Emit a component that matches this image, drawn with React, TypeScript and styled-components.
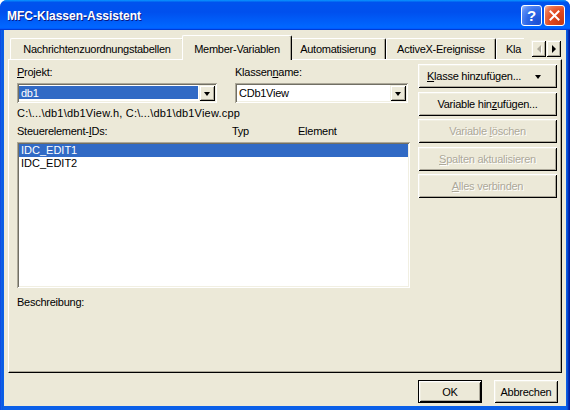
import React from "react";
import styled, { createGlobalStyle, css } from "styled-components";

const GlobalStyle = createGlobalStyle`
  html, body { margin: 0; padding: 0; background: #ffffff; }
  body {
    font-family: "Liberation Sans", Arial, sans-serif;
    font-size: 11px;
    letter-spacing: -0.25px;
    color: #000;
  }
  * { box-sizing: border-box; }
`;

const Window = styled.div`
  width: 570px;
  height: 410px;
  display: flex;
  flex-direction: column;
  border-radius: 7px 7px 0 0;
  overflow: hidden;
  background: linear-gradient(90deg, #0831d9 0, #166aee 1px, #0855dd 2px, #0a5fe8 3px, #0a5fe8 566px, #0a5ae0 567px, #0741c9 568px, #001ea0 569px);
`;

const TitleBar = styled.div`
  flex: none;
  height: 30px;
  display: flex;
  align-items: center;
  padding: 0 5px 0 7px;
  background: linear-gradient(180deg, #0997ff, #0053ee 8%, #0050ee 40%, #0066ff 88%, #0066ff 93%, #005bff 95%, #003dd7 96%, #003dd7);
`;

const TitleText = styled.div`
  flex: 1;
  color: #fff;
  font-weight: bold;
  font-size: 12px;
  letter-spacing: 0;
  text-shadow: 1px 1px #0a1883;
  padding-top: 1px;
`;

const CaptionButton = styled.div<{ $kind: "help" | "close" }>`
  width: 21px;
  height: 21px;
  margin-left: 2px;
  border: 1px solid #fff;
  border-radius: 3px;
  display: flex;
  align-items: center;
  justify-content: center;
  color: #fff;
  font-weight: bold;
  font-size: 15px;
  letter-spacing: 0;
  ${(p) =>
    p.$kind === "help"
      ? css`background: radial-gradient(circle at 85% 85%, #1b4fd4 0, #2d68e8 50%, #5a8cf5 80%, #a9c6ff 100%);`
      : css`background: radial-gradient(circle at 85% 85%, #c73a12 0, #e2491f 50%, #ec7853 80%, #f9c0a8 100%);`}
`;

const Client = styled.div`
  flex: 1;
  margin: 0 4px 4px;
  background: #ece9d8;
  display: flex;
  flex-direction: column;
  padding: 5px 4px 0;
`;

const TabRow = styled.div`
  flex: none;
  height: 25px;
  margin-bottom: -1px;
  display: flex;
  align-items: flex-end;
  padding-left: 2px;
  position: relative;
  z-index: 2;
`;

const TabStrip = styled.div`
  flex: none;
  width: 514px;
  height: 25px;
  display: flex;
  align-items: flex-end;
  overflow: hidden;
`;

const Tab = styled.div<{ $w: number; $active?: boolean; $cut?: boolean }>`
  flex: none;
  width: ${(p) => p.$w}px;
  height: ${(p) => (p.$active ? 25 : 21)}px;
  margin-bottom: ${(p) => (p.$active ? 0 : 1)}px;
  display: flex;
  align-items: center;
  justify-content: ${(p) => (p.$cut ? "flex-start" : "center")};
  padding-left: ${(p) => (p.$cut ? 9 : 0)}px;
  white-space: nowrap;
  background: #ece9d8;
  border-top: 1px solid #fff;
  border-left: 1px solid #fff;
  border-right: ${(p) => (p.$cut ? "none" : "1px solid #000")};
  box-shadow: ${(p) => (p.$cut ? "none" : "inset -1px 0 #aca899")};
  border-radius: 2px 2px 0 0;
  ${(p) =>
    p.$active &&
    css`
      margin-left: -2px;
      margin-right: -2px;
      position: relative;
      z-index: 1;
      padding-top: 1px;
    `}
`;

const Scroller = styled.div`
  display: flex;
  margin-left: 7px;
  margin-bottom: 3px;
`;

const ScrollButton = styled.div`
  width: 15px;
  height: 17px;
  background: #ece9d8;
  display: flex;
  align-items: center;
  justify-content: center;
  box-shadow: inset 1px 1px #f1efe2, inset -1px -1px #000, inset 2px 2px #fff, inset -2px -2px #aca899;
`;

const SideArrow = styled.div<{ $dir: "left" | "right"; $disabled?: boolean }>`
  width: 0;
  height: 0;
  border-top: 4px solid transparent;
  border-bottom: 4px solid transparent;
  ${(p) =>
    p.$dir === "left"
      ? css`border-right: 4px solid ${p.$disabled ? "#aca899" : "#000"};`
      : css`border-left: 4px solid ${p.$disabled ? "#aca899" : "#000"};`}
  ${(p) => p.$disabled && css`filter: drop-shadow(1px 1px 0 #fff);`}
`;

const Panel = styled.div`
  flex: none;
  height: 314px;
  border-top: 1px solid #fff;
  border-left: 1px solid #fff;
  border-right: 1px solid #000;
  border-bottom: 1px solid #000;
  box-shadow: inset -1px -1px #aca899;
  padding: 4px 4px 0 8px;
  display: grid;
  grid-template-columns: 393px 139px;
  column-gap: 8px;
  align-items: start;
`;

const LeftColumn = styled.div`
  display: flex;
  flex-direction: column;
`;

const FieldRow = styled.div`
  display: flex;
  gap: 18px;
`;

const Field = styled.div<{ $w: number }>`
  width: ${(p) => p.$w}px;
  display: flex;
  flex-direction: column;
`;

const Label = styled.div`
  height: 13px;
  line-height: 13px;
  margin-top: 2px;
  white-space: nowrap;
`;

const Combo = styled.div`
  margin-top: 4px;
  height: 20px;
  background: #fff;
  padding: 2px;
  display: flex;
  box-shadow: inset 1px 1px #aca899, inset -1px -1px #fff, inset 2px 2px #716f64, inset -2px -2px #f1efe2;
`;

const ComboValue = styled.div<{ $selected?: boolean }>`
  flex: 1;
  margin: 1px 1px 2px 0;
  padding-left: 2px;
  display: flex;
  align-items: center;
  white-space: nowrap;
  ${(p) => p.$selected && css`background: #316ac5; color: #fff;`}
`;

const DropButton = styled.div`
  flex: none;
  width: 16px;
  background: #ece9d8;
  display: flex;
  align-items: center;
  justify-content: center;
  box-shadow: inset 1px 1px #f1efe2, inset -1px -1px #000, inset 2px 2px #fff, inset -2px -2px #aca899;
`;

const DownArrow = styled.div<{ $disabled?: boolean }>`
  width: 0;
  height: 0;
  border-left: 3.5px solid transparent;
  border-right: 3.5px solid transparent;
  border-top: 4px solid ${(p) => (p.$disabled ? "#aca899" : "#000")};
  margin-top: 1px;
`;

const PathText = styled.div`
  margin-top: 4px;
  height: 13px;
  line-height: 13px;
  letter-spacing: 0.2px;
  white-space: nowrap;
`;

const ListHeader = styled.div`
  margin-top: 5px;
  height: 13px;
  line-height: 13px;
  display: grid;
  grid-template-columns: 215px 66px 1fr;
  white-space: nowrap;
`;

const ListBox = styled.div`
  margin-top: 4px;
  height: 146px;
  background: #fff;
  padding: 2px;
  box-shadow: inset 1px 1px #aca899, inset -1px -1px #fff, inset 2px 2px #716f64, inset -2px -2px #f1efe2;
`;

const ListRow = styled.div<{ $selected?: boolean }>`
  height: 13px;
  line-height: 13px;
  padding-left: 2px;
  letter-spacing: 0;
  ${(p) => p.$selected && css`background: #316ac5; color: #fff;`}
`;

const Description = styled.div`
  margin-top: 8px;
  height: 13px;
  line-height: 13px;
`;

const ButtonColumn = styled.div`
  display: flex;
  flex-direction: column;
  gap: 3.5px;
`;

const Button = styled.div<{ $disabled?: boolean; $default?: boolean; $w?: number; $h?: number }>`
  width: ${(p) => (p.$w ? `${p.$w}px` : "100%")};
  height: ${(p) => p.$h ?? 24}px;
  background: #ece9d8;
  display: flex;
  align-items: center;
  justify-content: center;
  white-space: nowrap;
  box-shadow: inset 1px 1px #fff, inset -1px -1px #000, inset 2px 2px #f1efe2, inset -2px -2px #aca899;
  ${(p) =>
    p.$default &&
    css`
      border: 1px solid #000;
    `}
  ${(p) =>
    p.$disabled &&
    css`
      color: #aca899;
      text-shadow: 1px 1px 0 #fff;
    `}
`;

const SplitButtonInner = styled.div`
  width: 100%;
  display: flex;
  align-items: center;
  justify-content: space-between;
  padding: 0 16px 0 9px;
`;

const Mn = styled.span`
  text-decoration: underline;
  text-underline-offset: 1px;
`;

const Footer = styled.div`
  flex: none;
  display: flex;
  justify-content: flex-end;
  gap: 12px;
  padding: 7px 4px 0 0;
`;

export default function App() {
  return (
    <>
      <GlobalStyle />
      <Window>
        <TitleBar>
          <TitleText>MFC-Klassen-Assistent</TitleText>
          <CaptionButton $kind="help">?</CaptionButton>
          <CaptionButton $kind="close">
            <svg width="11" height="11" viewBox="0 0 11 11">
              <path d="M1.5 1.5 L9.5 9.5 M9.5 1.5 L1.5 9.5" stroke="#fff" strokeWidth="2" strokeLinecap="square" />
            </svg>
          </CaptionButton>
        </TitleBar>
        <Client>
          <TabRow>
            <TabStrip>
              <Tab $w={174}>Nachrichtenzuordnungstabellen</Tab>
              <Tab $w={110} $active>Member-Variablen</Tab>
              <Tab $w={96}>Automatisierung</Tab>
              <Tab $w={110}>ActiveX-Ereignisse</Tab>
              <Tab $w={30} $cut>Kla</Tab>
            </TabStrip>
            <Scroller>
              <ScrollButton>
                <SideArrow $dir="left" $disabled />
              </ScrollButton>
              <ScrollButton>
                <SideArrow $dir="right" />
              </ScrollButton>
            </Scroller>
          </TabRow>
          <Panel>
            <LeftColumn>
              <FieldRow>
                <Field $w={200}>
                  <Label>
                    <Mn>P</Mn>rojekt:
                  </Label>
                  <Combo>
                    <ComboValue $selected>db1</ComboValue>
                    <DropButton>
                      <DownArrow />
                    </DropButton>
                  </Combo>
                </Field>
                <Field $w={173}>
                  <Label>
                    Klassen<Mn>n</Mn>ame:
                  </Label>
                  <Combo>
                    <ComboValue>CDb1View</ComboValue>
                    <DropButton>
                      <DownArrow />
                    </DropButton>
                  </Combo>
                </Field>
              </FieldRow>
              <PathText>C:\...\db1\db1View.h, C:\...\db1\db1View.cpp</PathText>
              <ListHeader>
                <span>
                  Steuerelement-<Mn>I</Mn>Ds:
                </span>
                <span>Typ</span>
                <span>Element</span>
              </ListHeader>
              <ListBox>
                <ListRow $selected>IDC_EDIT1</ListRow>
                <ListRow>IDC_EDIT2</ListRow>
              </ListBox>
              <Description>Beschreibung:</Description>
            </LeftColumn>
            <ButtonColumn>
              <Button>
                <SplitButtonInner>
                  <span>
                    <Mn>K</Mn>lasse hinzufügen...
                  </span>
                  <DownArrow />
                </SplitButtonInner>
              </Button>
              <Button>
                <span>
                  Variable hin<Mn>z</Mn>ufügen...
                </span>
              </Button>
              <Button $disabled>
                <span>
                  Variable <Mn>l</Mn>öschen
                </span>
              </Button>
              <Button $disabled>
                <span>
                  <Mn>S</Mn>palten aktualisieren
                </span>
              </Button>
              <Button $disabled>
                <span>
                  <Mn>A</Mn>lles verbinden
                </span>
              </Button>
            </ButtonColumn>
          </Panel>
          <Footer>
            <Button $default $w={64} $h={23}>
              OK
            </Button>
            <Button $w={64} $h={23}>
              Abbrechen
            </Button>
          </Footer>
        </Client>
      </Window>
    </>
  );
}
